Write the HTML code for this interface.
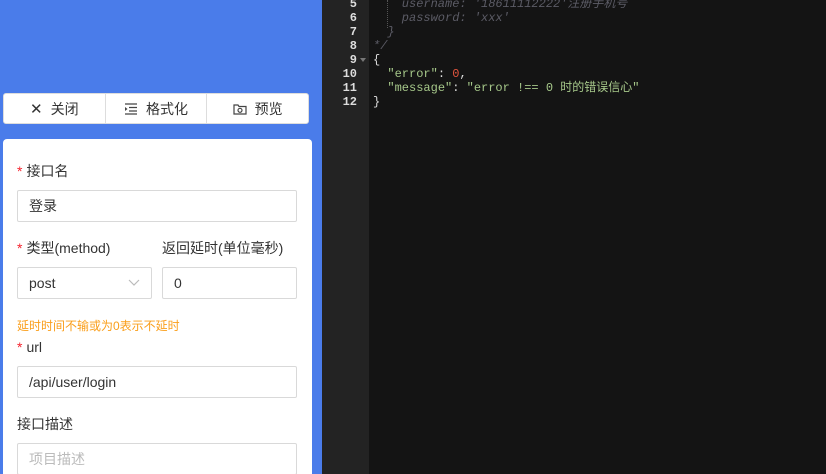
<!DOCTYPE html>
<html><head><meta charset="utf-8"><style>
*{margin:0;padding:0;box-sizing:border-box}
html,body{width:826px;height:474px;overflow:hidden}
body{background:#141414;position:relative;font-family:"Liberation Sans","Noto Sans CJK SC",sans-serif;font-size:14px;color:#333}
.left{position:absolute;left:0;top:0;width:322px;height:474px;background:#4a7cea}
.tb{position:absolute;left:3px;top:93px;width:306px;height:31px;background:#fff;border:1px solid #ddd;border-radius:3px;display:flex}
.tb div{flex:1;display:flex;align-items:center;justify-content:center;font-size:14px;color:#333;border-right:1px solid #ddd;gap:8px}
.tb div:last-child{border-right:none}
.card{position:absolute;left:3px;top:139px;width:309px;height:335px;background:#fff;border-radius:4px 4px 0 0}
.lab{position:absolute;font-size:14px;color:#333;line-height:16px}
.lab b{color:#f5222d;font-weight:normal;margin-right:4px}
.inp{position:absolute;height:32px;border:1px solid #d9d9d9;border-radius:2px;background:#fff;padding-left:11px;line-height:30px;font-size:14px;color:#333}
.gut{position:absolute;left:322px;top:0;width:47px;height:474px;background:#232323}
.code{position:absolute;font-family:"Liberation Mono","Noto Sans CJK SC",monospace;font-size:12px;line-height:14px;white-space:pre}
.ln{left:322px;width:35px;text-align:right;color:#ddd;font-weight:bold;top:-3px}
.src{left:373px;top:-3px;color:#ddd}
.c{color:#5c5c66;font-style:italic}
.s{color:#a6c88a}
.n{color:#e2553e}
</style></head><body>
<div class="left"></div>
<div class="tb">
<div><span style="font-size:15px">✕</span>关闭</div>
<div><svg width="14" height="12" viewBox="0 0 14 12"><path d="M1 1h12M5 4.5h8M5 8h8M1 11h12" stroke="#444" stroke-width="1.3"/><path d="M1 4l2.5 2L1 8z" fill="#444"/></svg>格式化</div>
<div><svg width="14" height="12" viewBox="0 0 14 12"><path d="M1 2h4l1 1.5h7V11H1z" fill="none" stroke="#444" stroke-width="1.2"/><circle cx="7" cy="7.3" r="2" fill="none" stroke="#444" stroke-width="1.2"/></svg>预览</div>
</div>
<div class="card"></div>
<div class="lab" style="left:17px;top:163px"><b>*</b>接口名</div>
<div class="inp" style="left:17px;top:190px;width:280px">登录</div>
<div class="lab" style="left:17px;top:240px"><b>*</b>类型(method)</div>
<div class="lab" style="left:162px;top:240px">返回延时(单位毫秒)</div>
<div class="inp" style="left:17px;top:267px;width:135px">post<svg style="position:absolute;right:11px;top:11px" width="12" height="8" viewBox="0 0 12 8"><path d="M1 1l5 5 5-5" fill="none" stroke="#bbb" stroke-width="1.2"/></svg></div>
<div class="inp" style="left:162px;top:267px;width:135px">0</div>
<div class="lab" style="left:17px;top:318px;font-size:12px;color:#fa9e1a">延时时间不输或为0表示不延时</div>
<div class="lab" style="left:17px;top:339px"><b>*</b>url</div>
<div class="inp" style="left:17px;top:366px;width:280px">/api/user/login</div>
<div class="lab" style="left:17px;top:416px">接口描述</div>
<div class="inp" style="left:17px;top:443px;width:280px;color:#bbb">项目描述</div>
<div class="gut"></div>
<div class="code ln">5
6
7
8
9
10
11
12</div>
<div style="position:absolute;left:360px;top:58px;width:0;height:0;border-left:3px solid transparent;border-right:3px solid transparent;border-top:4px solid #777"></div>
<div style="position:absolute;left:387px;top:0;height:28px;border-left:1px dotted #555"></div>
<div class="code src"><span class="c">    username: '18611112222'注册手机号
    password: 'xxx'
  }
*/</span>
{
  <span class="s">"error"</span>: <span class="n">0</span>,
  <span class="s">"message"</span>: <span class="s">"error !== 0 时的错误信心"</span>
}</div>
</body></html>
